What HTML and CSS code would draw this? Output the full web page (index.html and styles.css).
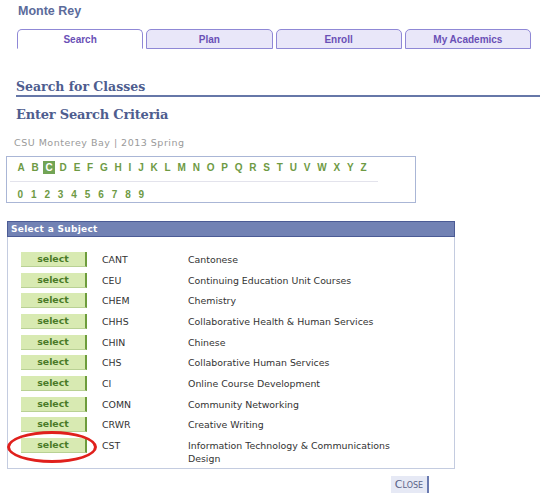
FILE: index.html
```html
<!DOCTYPE html>
<html>
<head>
<meta charset="utf-8">
<link rel="stylesheet" href="styles.css">
</head>
<body>
<div class="brand">Monte Rey</div>
<div class="tabs">
  <div class="tab active">Search</div>
  <div class="tab">Plan</div>
  <div class="tab">Enroll</div>
  <div class="tab">My Academics</div>
</div>
<h1 class="page-title">Search for Classes</h1>
<h2 class="sub-title">Enter Search Criteria</h2>
<div class="context">CSU Monterey Bay | 2013 Spring</div>
<div class="alpha-box">
  <div class="alpha-row">
    <span class="ch">A</span><span class="ch">B</span><span class="ch on">C</span><span class="ch">D</span><span class="ch">E</span><span class="ch">F</span><span class="ch">G</span><span class="ch">H</span><span class="ch">I</span><span class="ch">J</span><span class="ch">K</span><span class="ch">L</span><span class="ch">M</span><span class="ch">N</span><span class="ch">O</span><span class="ch">P</span><span class="ch">Q</span><span class="ch">R</span><span class="ch">S</span><span class="ch">T</span><span class="ch">U</span><span class="ch">V</span><span class="ch">W</span><span class="ch">X</span><span class="ch">Y</span><span class="ch">Z</span>
  </div>
  <div class="alpha-sep"></div>
  <div class="alpha-row digits">
    <span class="ch">0</span><span class="ch">1</span><span class="ch">2</span><span class="ch">3</span><span class="ch">4</span><span class="ch">5</span><span class="ch">6</span><span class="ch">7</span><span class="ch">8</span><span class="ch">9</span>
  </div>
</div>
<div class="panel">
  <div class="panel-head">Select a Subject</div>
  <div class="panel-body">
    <div class="row"><span class="btn">select</span><span class="code">CANT</span><span class="desc">Cantonese</span></div>
    <div class="row"><span class="btn">select</span><span class="code">CEU</span><span class="desc">Continuing Education Unit Courses</span></div>
    <div class="row"><span class="btn">select</span><span class="code">CHEM</span><span class="desc">Chemistry</span></div>
    <div class="row"><span class="btn">select</span><span class="code">CHHS</span><span class="desc">Collaborative Health &amp; Human Services</span></div>
    <div class="row"><span class="btn">select</span><span class="code">CHIN</span><span class="desc">Chinese</span></div>
    <div class="row"><span class="btn">select</span><span class="code">CHS</span><span class="desc">Collaborative Human Services</span></div>
    <div class="row"><span class="btn">select</span><span class="code">CI</span><span class="desc">Online Course Development</span></div>
    <div class="row"><span class="btn">select</span><span class="code">COMN</span><span class="desc">Community Networking</span></div>
    <div class="row"><span class="btn">select</span><span class="code">CRWR</span><span class="desc">Creative Writing</span></div>
    <div class="row marked"><span class="btn">select</span><span class="code">CST</span><span class="desc">Information Technology &amp; Communications Design</span><span class="ring"></span></div>
  </div>
</div>
<div class="close-wrap"><span class="close-btn">Close</span></div>
</body>
</html>
```
FILE: styles.css
```css
html, body { margin: 0; padding: 0; background: #fff; }
body { font-family: "DejaVu Sans", Verdana, sans-serif; font-size: 9.4px; color: #333; width: 540px; }

.brand {
  font-family: "Liberation Sans", Arial, sans-serif;
  font-weight: bold;
  font-size: 12.5px;
  line-height: 14px;
  color: #5b6b9b;
  padding: 4px 0 0 18px;
}

.tabs {
  display: flex;
  gap: 3px;
  margin: 11px 0 0 17px;
  width: 514px;
}
.tab {
  flex: 1;
  height: 16px;
  padding-top: 2px;
  line-height: 16px;
  text-align: center;
  border: 1px solid #8f88d6;
  border-radius: 5px 5px 0 0;
  background: #e9e7f9;
  font-family: "Liberation Sans", Arial, sans-serif;
  font-weight: bold;
  font-size: 10px;
  color: #6a50b6;
}
.tab.active { background: #fff; border-bottom-color: #fff; }

.page-title {
  margin: 30px 0 0 16px;
  font-family: "DejaVu Serif", Georgia, serif;
  font-weight: bold;
  font-size: 12.5px;
  line-height: 16px;
  color: #4e5d8f;
  border-bottom: 2px solid #6677a8;
}
.sub-title {
  margin: 9px 0 0 16px;
  font-family: "DejaVu Serif", Georgia, serif;
  font-weight: bold;
  font-size: 13px;
  letter-spacing: -0.2px;
  line-height: 18px;
  color: #4e5d8f;
}
.context {
  margin: 13px 0 0 14px;
  font-size: 9.5px;
  letter-spacing: 0.5px;
  line-height: 12px;
  color: #9a9a9a;
}

.alpha-box {
  margin: 7px 0 0 6px;
  width: 408px;
  height: 45px;
  border: 1px solid #aab6d6;
  padding: 0;
}
.alpha-row {
  display: flex;
  padding: 4px 0 0 8px;
  height: 13px;
}
.alpha-row.digits { padding-top: 6px; }
.ch {
  font-family: "Liberation Sans", Arial, sans-serif;
  font-weight: bold;
  font-size: 10px;
  line-height: 13px;
  color: #6e9a44;
  padding: 0 2.5px;
  margin-right: 1.8px;
}
.digits .ch { margin-right: 2.9px; }
.ch.on { background: #72a455; color: #fff; }
.alpha-sep {
  margin: 7px 0 0 3px;
  width: 368px;
  height: 1px;
  background: #e3e3ec;
}

.panel {
  margin: 18px 0 0 7px;
  width: 448px;
}
.panel-head {
  height: 14px;
  line-height: 14px;
  background: #7282b4;
  border: 1px solid #4b5b95;
  color: #fff;
  font-weight: bold;
  font-size: 9px;
  letter-spacing: 0.3px;
  padding-left: 3px;
}
.panel-body {
  border: 1px solid #c4cce0;
  border-top: none;
  padding: 12.2px 0 0 13px;
}
.row {
  display: flex;
  align-items: flex-start;
  padding: 2.83px 0;
  position: relative;
}
.btn {
  width: 64px;
  height: 14px;
  line-height: 14px;
  text-align: center;
  background: #d8eab2;
  border-right: 2px solid #6d9c3c;
  border-bottom: 1px solid #b9d194;
  font-weight: bold;
  font-size: 9.4px;
  color: #4a7a28;
}
.code { margin-left: 15px; width: 86px; line-height: 13px; padding-top: 1px; }
.desc { width: 218px; line-height: 13px; padding-top: 1px; }
.ring {
  position: absolute;
  left: -14px;
  top: -4px;
  width: 84px;
  height: 26px;
  border: 3px solid #e0201c;
  border-radius: 50%;
}

.close-wrap { padding: 7px 0 0 391px; }
.close-btn {
  display: inline-block;
  width: 36px;
  height: 17px;
  line-height: 17px;
  text-align: center;
  background: #e6e9f5;
  border-right: 2px solid #6a7ab0;
  font-variant: small-caps;
  font-size: 11px;
  color: #5a6488;
}
```
